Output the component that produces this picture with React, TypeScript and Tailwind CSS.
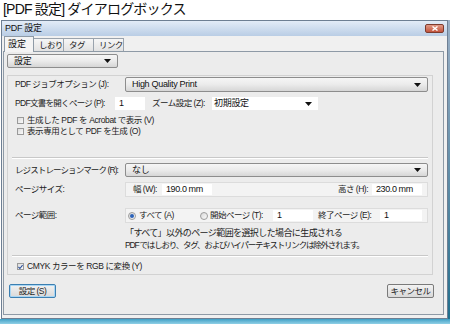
import React from "react";

const font = "font-['Liberation_Sans','Noto_Sans_CJK_JP',sans-serif]";

function Arrow() {
  return (
    <svg width="7" height="4" viewBox="0 0 7 4" className="shrink-0">
      <path d="M0 0 H7 L3.5 4 Z" fill="#111" />
    </svg>
  );
}

function Select({ label, className = "", flat = false }: { label: string; className?: string; flat?: boolean }) {
  return (
    <div
      className={`flex items-center justify-between pr-[6px] text-[9px] leading-none text-[#111] tracking-[-0.3px] ${
        flat
          ? "bg-white pl-[2px]"
          : "pl-[6px] bg-gradient-to-b from-[#f6f6f6] via-[#ebebeb] to-[#d6d6d6] border border-[#8d8d8d] rounded-[2px]"
      } ${className}`}
    >
      <span>{label}</span>
      <Arrow />
    </div>
  );
}

function Input({ value, className = "" }: { value: string; className?: string }) {
  return (
    <div className={`bg-white flex items-center pl-[4px] text-[9px] leading-none text-[#111] tracking-[-0.4px] ${className}`}>
      {value}
    </div>
  );
}

function Check({ checked = false, label }: { checked?: boolean; label: string }) {
  return (
    <div className="flex items-center h-[11px] pl-[9px] text-[8.5px] leading-none text-[#222] tracking-[-0.4px]">
      <div className="w-[7px] h-[7px] border border-[#9a9a9a] bg-gradient-to-br from-[#dcdcdc] to-[#fafafa] flex items-center justify-center mr-[3px]">
        {checked && (
          <svg width="6" height="6" viewBox="0 0 6 6">
            <path d="M0.5 3 L2.3 4.8 L5.5 0.8" stroke="#2a4f9a" strokeWidth="1.3" fill="none" />
          </svg>
        )}
      </div>
      <span>{label}</span>
    </div>
  );
}

function Radio({ on = false }: { on?: boolean }) {
  return (
    <div className="w-[8px] h-[8px] shrink-0 rounded-full border border-[#9c9c9c] bg-gradient-to-br from-[#d8d8d8] to-[#fbfbfb] flex items-center justify-center">
      {on && <div className="w-[4px] h-[4px] rounded-full bg-[#2d63b8]" />}
    </div>
  );
}

function Label({ text, className = "" }: { text: string; className?: string }) {
  return <span className={`shrink-0 text-[8.5px] leading-none text-[#222] tracking-[-0.5px] ${className}`}>{text}</span>;
}

export default function App() {
  return (
    <div className={`w-[450px] h-[324px] bg-white overflow-hidden whitespace-nowrap ${font}`}>
      <div className="h-[20px] pl-[3px] text-[14px] leading-[18px] text-[#111] tracking-[-0.8px]">
        [PDF 設定] ダイアログボックス
      </div>

      <div className="flex h-[299px]">
        <div className="ml-[1px] w-[447px] border border-[#6e7f93] bg-[#f0f0f0] flex flex-col">
          {/* title bar */}
          <div className="h-[15px] flex items-center bg-gradient-to-b from-[#e3ecf7] to-[#b9cde5] pl-[3px]">
            <span className="text-[9px] leading-none text-[#111] tracking-[-0.3px]">PDF 設定</span>
            <div className="ml-auto mr-[3px] w-[19px] h-[9px] rounded-[2px] border border-[#7d3b2d] bg-gradient-to-b from-[#e19a87] to-[#c2533c] flex items-center justify-center">
              <svg width="6" height="5" viewBox="0 0 6 5">
                <path d="M0.5 0.5 L5.5 4.5 M5.5 0.5 L0.5 4.5" stroke="#fff" strokeWidth="1.4" />
              </svg>
            </div>
          </div>

          {/* tabs */}
          <div className="h-[15px] flex items-end pl-[2px]">
            <div className="h-[16px] w-[30px] bg-[#f4f4f4] border border-b-0 border-[#8e9aa6] flex items-center pl-[3px] text-[9px] leading-none text-[#111] relative top-[1px] z-10">
              設定
            </div>
            {["しおり", "タグ", "リンク"].map((t) => (
              <div
                key={t}
                className="h-[13px] w-[30px] bg-gradient-to-b from-[#f6f6f6] to-[#e2e2e2] border border-b-0 border-l-0 border-[#9aa3ad] flex items-center pl-[5px] text-[8.5px] leading-none text-[#222] tracking-[-0.6px]"
              >
                {t}
              </div>
            ))}
          </div>

          {/* tab panel */}
          <div className="ml-[1px] w-[441px] h-[264px] border border-[#8e9aa6] bg-[#ececec] flex flex-col">
            <Select label="設定" className="mt-[2px] ml-[3px] w-[111px] h-[14px]" />

            <div className="mt-[7px] ml-[3px] w-[426px] h-[200px] border border-[#d2d2d2] flex flex-col">
              <div className="mt-[1px] h-[15px] flex items-center">
                <Label text="PDF ジョブオプション (J):" className="pl-[7px] w-[117px]" />
                <Select label="High Quality Print" className="w-[303px] h-[15px]" />
              </div>

              <div className="mt-[5px] h-[13px] flex items-center">
                <Label text="PDF文書を開くページ (P):" className="pl-[7px] w-[107px] tracking-[-0.7px]" />
                <Input value="1" className="w-[30px] h-[13px]" />
                <Label text="ズーム設定 (Z):" className="ml-[7px] w-[60px]" />
                <Select label="初期設定" flat className="w-[106px] h-[13px]" />
              </div>

              <div className="mt-[5px]">
                <Check label="生成した PDF を Acrobat で表示 (V)" />
              </div>
              <div>
                <Check label="表示専用として PDF を生成 (O)" />
              </div>

              <div className="mt-[20px] mx-[4px] border-t border-[#c8c8c8] border-b border-b-white" />

              <div className="mt-[4px] h-[14px] flex items-center">
                <Label text="レジストレーションマーク (R):" className="pl-[7px] w-[117px] tracking-[-0.9px]" />
                <Select label="なし" className="w-[303px] h-[14px]" />
              </div>

              <div className="mt-[5px] h-[15px] flex items-center">
                <Label text="ページサイズ:" className="pl-[7px] w-[117px]" />
                <div className="w-[303px] h-[15px] bg-[#f3f3f3] border border-[#dcdcdc] flex items-center">
                  <Label text="幅 (W):" className="ml-[7px] w-[29px]" />
                  <Input value="190.0 mm" className="w-[50px] h-[11px]" />
                  <Label text="高さ (H):" className="ml-auto mr-[4px]" />
                  <Input value="230.0 mm" className="w-[50px] h-[11px] mr-[5px]" />
                </div>
              </div>

              <div className="mt-[11px] h-[15px] flex items-center">
                <Label text="ページ範囲:" className="pl-[7px] w-[117px]" />
                <div className="w-[303px] h-[15px] bg-[#f3f3f3] border border-[#dcdcdc] flex items-center">
                  <div className="ml-[2px]">
                    <Radio on />
                  </div>
                  <Label text="すべて (A)" className="ml-[3px] w-[61px]" />
                  <Radio />
                  <Label text="開始ページ (T):" className="ml-[2px] w-[63px]" />
                  <Input value="1" className="w-[40px] h-[11px]" />
                  <Label text="終了ページ (E):" className="ml-[5px] w-[62px]" />
                  <Input value="1" className="w-[42px] h-[11px]" />
                </div>
              </div>

              <div className="mt-[4px] pl-[117px] text-[9px] leading-[12px] text-[#222]">
                <div className="tracking-[-0.6px]">「すべて」以外のページ範囲を選択した場合に生成される</div>
                <div className="text-[8.5px] tracking-[-1.2px]">PDF ではしおり、タグ、およびハイパーテキストリンクは除外されます。</div>
              </div>

              <div className="mt-[4px] mx-[4px] border-t border-[#c8c8c8] border-b border-b-white" />

              <div className="mt-[4px]">
                <Check checked label="CMYK カラーを RGB に変換 (Y)" />
              </div>
            </div>

            <div className="mt-[9px] flex justify-between pl-[5px] pr-[9px]">
              <div className="w-[47px] h-[14px] rounded-[2px] border border-[#3c7fb1] bg-gradient-to-b from-[#f2f2f2] to-[#d9d9d9] shadow-[inset_0_0_0_1px_#a8d6f4] flex items-center justify-center">
                <Label text="設定 (S)" />
              </div>
              <div className="w-[47px] h-[14px] rounded-[2px] border border-[#7a7a7a] bg-gradient-to-b from-[#f2f2f2] to-[#d9d9d9] flex items-center justify-center">
                <Label text="キャンセル" />
              </div>
            </div>
          </div>
        </div>
        <div className="w-[2px] bg-gradient-to-b from-[#9bb0c6] to-[#1f6f8e]" />
      </div>
      <div className="h-[5px] bg-gradient-to-b from-[#3da0c6] to-[#8fd0e6]" />
    </div>
  );
}
